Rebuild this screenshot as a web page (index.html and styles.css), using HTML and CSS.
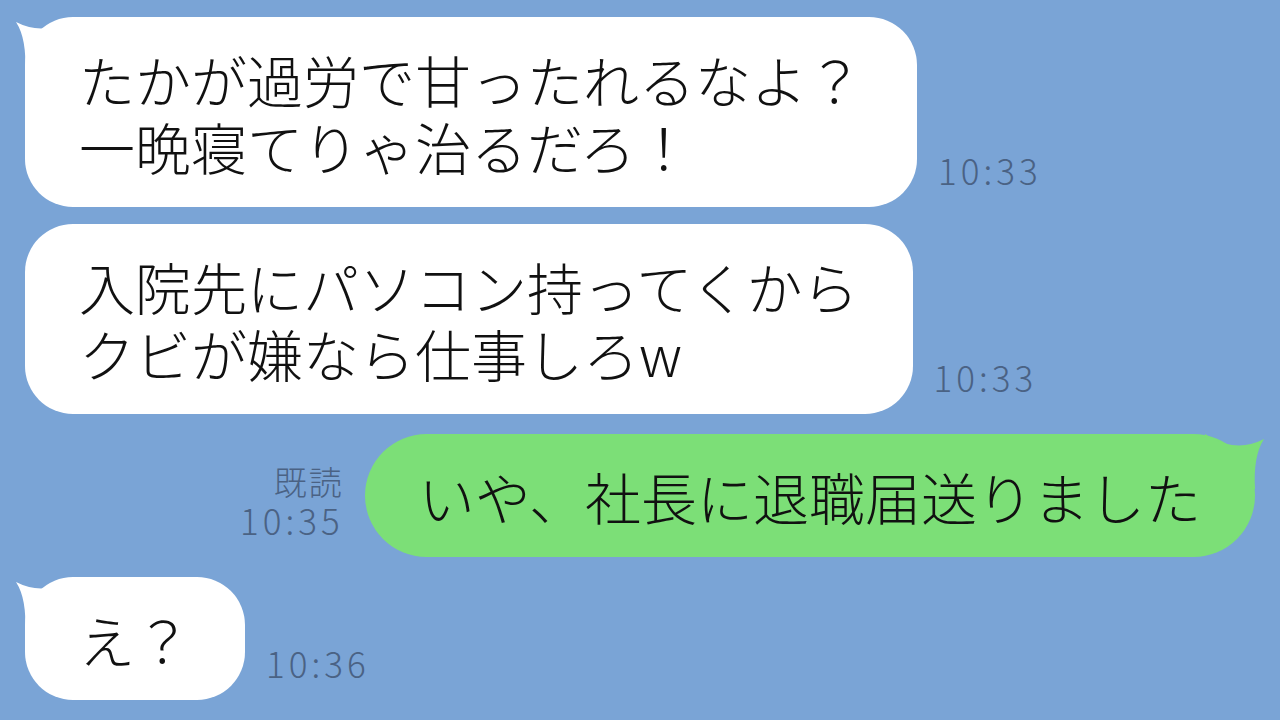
FILE: index.html
```html
<!DOCTYPE html>
<html lang="ja">
<head>
    <meta charset="UTF-8">
    <meta name="viewport" content="width=device-width, initial-scale=1.0">
    <title>トーク</title>
    <link rel="stylesheet" href="styles.css">
</head>
<body>

<div class="chat">
    <div class="row row-left first">
        <div class="bubble bubble-white">
            <svg class="tail tail-left" width="70" height="60" viewBox="0 0 70 60"><path d="M1 5 Q30 20 60 0 L60 55 L10 55 Q12 22 1 5 Z"/></svg>
            <p>たかが過労で甘ったれるなよ？<br>一晩寝てりゃ治るだろ！</p>
        </div>
        <div class="meta">
            <span class="time">10:33</span>
        </div>
    </div>

    <div class="row row-left second">
        <div class="bubble bubble-white">
            <p>入院先にパソコン持ってくから<br>クビが嫌なら仕事しろw</p>
        </div>
        <div class="meta">
            <span class="time">10:33</span>
        </div>
    </div>

    <div class="row row-right">
        <div class="meta meta-right">
            <span class="read">既読</span>
            <span class="time">10:35</span>
        </div>
        <div class="bubble bubble-green">
            <svg class="tail tail-right" width="70" height="60" viewBox="0 0 70 60"><path d="M1 5 Q30 20 60 0 L60 55 L10 55 Q12 22 1 5 Z"/></svg>
            <p>いや、社長に退職届送りました</p>
        </div>
    </div>

    <div class="row row-left">
        <div class="bubble bubble-white">
            <svg class="tail tail-left" width="70" height="60" viewBox="0 0 70 60"><path d="M1 5 Q30 20 60 0 L60 55 L10 55 Q12 22 1 5 Z"/></svg>
            <p>え？</p>
        </div>
        <div class="meta">
            <span class="time">10:36</span>
        </div>
    </div>
</div>

</body>
</html>
```

FILE: styles.css
```css
body {
    margin: 0;
    padding: 0;
    background-color: #7aa4d6;
    font-family: "Noto Sans CJK JP", "Noto Sans", sans-serif;
    overflow: hidden;
}

.chat {
    display: flex;
    flex-direction: column;
    padding: 17px 25px 0 25px;
}

.row {
    display: flex;
    align-items: flex-end;
    gap: 21px;
    margin-top: 20px;
}

.row.first {
    margin-top: 0;
}

.row.second {
    margin-top: 17px;
}

.row-right {
    justify-content: flex-end;
}

.bubble {
    position: relative;
    padding: 28px 54px;
    border-radius: 48px;
}

.bubble p {
    margin: 0;
    font-size: 56px;
    font-weight: 300;
    line-height: 67px;
    color: #111;
    white-space: nowrap;
}

.bubble-white {
    background-color: #fff;
}

.bubble-white .tail {
    fill: #fff;
}

.bubble-green {
    background-color: #7cdf77;
    border-radius: 62px;
}

.bubble-green .tail {
    fill: #7cdf77;
}

.tail {
    position: absolute;
    top: 0;
}

.tail-left {
    left: -10px;
}

.tail-right {
    right: -10px;
    transform: scaleX(-1);
}

.meta {
    display: flex;
    flex-direction: column;
    padding-bottom: 18px;
    color: #4a6284;
}

.meta-right {
    align-items: flex-end;
}

.time {
    font-size: 35px;
    font-weight: 300;
    line-height: 38px;
    letter-spacing: 4px;
}

.read {
    font-size: 33px;
    font-weight: 300;
    line-height: 40px;
    letter-spacing: 2px;
}
```
